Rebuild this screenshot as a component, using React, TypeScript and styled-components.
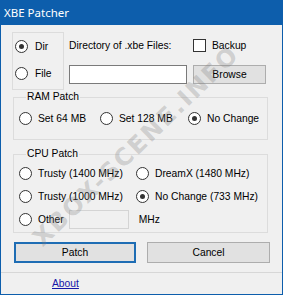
import styled, { createGlobalStyle } from 'styled-components'

const GlobalStyle = createGlobalStyle`
  html, body {
    margin: 0;
    padding: 0;
    background: #ffffff;
  }
  body {
    font-family: "Liberation Sans", Arial, sans-serif;
    font-size: 10.3px;
    color: #000000;
  }
`

const Window = styled.div`
  position: relative;
  width: 283px;
  height: 295px;
  box-sizing: border-box;
  border: 1px solid #0d5eac;
  border-top: none;
  display: flex;
  flex-direction: column;
  overflow: hidden;
`

const TitleBar = styled.div`
  height: 25px;
  margin: 0 -1px;
  background: #0d5eac;
  color: #ffffff;
  display: flex;
  align-items: center;
  padding-left: 4px;
  font-family: "Noto Sans", "Open Sans", sans-serif;
  font-size: 11.5px;
`

const Client = styled.div`
  flex: 1;
  background: #f0f0f0;
  display: flex;
  flex-direction: column;
`

const TopRow = styled.div`
  display: flex;
  gap: 5px;
  margin-top: 7px;
  padding-left: 11px;
`

const DirBox = styled.div`
  width: 52px;
  height: 58px;
  box-sizing: border-box;
  border: 1px solid #dcdcdc;
  padding: 7px 0 0 2px;
  display: flex;
  flex-direction: column;
  gap: 14px;
`

const FileArea = styled.div`
  display: grid;
  grid-template-columns: 118px 73px;
  grid-template-rows: 27px 19px;
  column-gap: 6px;
  row-gap: 6px;
  align-items: center;
`

const Option = styled.label<{ gap?: number }>`
  display: flex;
  align-items: center;
  gap: ${({ gap }) => gap ?? 6}px;
  height: 13px;
  white-space: nowrap;
`

const RadioCircle = styled.span<{ checked?: boolean }>`
  width: 13px;
  height: 13px;
  box-sizing: border-box;
  border: 1px solid #333333;
  border-radius: 50%;
  background: #ffffff;
  display: flex;
  align-items: center;
  justify-content: center;
  flex-shrink: 0;

  &::after {
    content: '';
    width: 5px;
    height: 5px;
    border-radius: 50%;
    background: ${({ checked }) => (checked ? '#333333' : 'transparent')};
  }
`

const CheckBox = styled.span`
  width: 13px;
  height: 13px;
  box-sizing: border-box;
  border: 1px solid #333333;
  background: #ffffff;
  flex-shrink: 0;
`

const TextBox = styled.div<{ disabled?: boolean; w?: number; h?: number }>`
  width: ${({ w }) => (w ? `${w}px` : '100%')};
  height: ${({ h }) => h ?? 19}px;
  box-sizing: border-box;
  border: 1px solid ${({ disabled }) => (disabled ? '#d4d4d4' : '#7a7a7a')};
  background: ${({ disabled }) => (disabled ? '#f0f0f0' : '#ffffff')};
`

const Button = styled.button<{ isDefault?: boolean; w?: number; h?: number }>`
  width: ${({ w }) => (w ? `${w}px` : '100%')};
  height: ${({ h }) => h ?? 19}px;
  box-sizing: border-box;
  margin: 0;
  padding: 0;
  background: #e1e1e1;
  border: ${({ isDefault }) => (isDefault ? '2px solid #1e6db4' : '1px solid #adadad')};
  font-family: inherit;
  font-size: inherit;
  color: #000000;
`

const Group = styled.fieldset<{ h: number; mt: number }>`
  margin: ${({ mt }) => mt}px 0 0 12px;
  width: 255px;
  height: ${({ h }) => h}px;
  box-sizing: border-box;
  border: 1px solid #dcdcdc;
  padding: 0 0 0 5px;
  min-width: 0;
`

const Legend = styled.legend`
  margin-left: 7px;
  padding: 0 1px;
  line-height: 12px;
`

const RamRow = styled.div`
  display: grid;
  grid-template-columns: 81px 88px auto;
  margin-top: 9px;
`

const CpuGrid = styled.div`
  display: grid;
  grid-template-columns: 117px auto;
  grid-auto-rows: 23px;
  align-items: center;
  margin-top: 2px;
`

const OtherRow = styled.div`
  grid-column: 1 / span 2;
  display: flex;
  align-items: center;
`

const OtherBox = styled(TextBox)`
  margin-left: 5px;
`

const Mhz = styled.span`
  margin-left: 10px;
`

const ButtonRow = styled.div`
  display: flex;
  gap: 11px;
  margin-top: 9px;
  padding-left: 13px;
`

const Separator = styled.div`
  height: 1px;
  background: #d7d7d7;
  margin-top: 9px;
`

const AboutLink = styled.a`
  margin: 5px 0 0 51px;
  color: #1616a8;
  text-decoration: underline;
  line-height: 12px;
  align-self: flex-start;
`

// watermark overlay from the source screenshot
const Watermark = styled.span`
  position: absolute;
  left: 135px;
  top: 146px;
  transform: translate(-50%, -50%) rotate(-44deg);
  font-family: "DejaVu Sans", sans-serif;
  font-weight: bold;
  font-size: 24px;
  letter-spacing: 2px;
  color: rgba(128, 128, 128, 0.3);
  white-space: nowrap;
  pointer-events: none;
`

export default function App() {
  return (
    <>
      <GlobalStyle />
      <Window>
        <TitleBar>XBE Patcher</TitleBar>
        <Client>
          <TopRow>
            <DirBox>
              <Option gap={7}>
                <RadioCircle checked />
                Dir
              </Option>
              <Option gap={7}>
                <RadioCircle />
                File
              </Option>
            </DirBox>
            <FileArea>
              <span>Directory of .xbe Files:</span>
              <Option>
                <CheckBox />
                Backup
              </Option>
              <TextBox />
              <Button>Browse</Button>
            </FileArea>
          </TopRow>

          <Group h={49} mt={1}>
            <Legend>RAM Patch</Legend>
            <RamRow>
              <Option>
                <RadioCircle />
                Set 64 MB
              </Option>
              <Option>
                <RadioCircle />
                Set 128 MB
              </Option>
              <Option>
                <RadioCircle checked />
                No Change
              </Option>
            </RamRow>
          </Group>

          <Group h={85} mt={8}>
            <Legend>CPU Patch</Legend>
            <CpuGrid>
              <Option>
                <RadioCircle />
                Trusty (1400 MHz)
              </Option>
              <Option>
                <RadioCircle />
                DreamX (1480 MHz)
              </Option>
              <Option>
                <RadioCircle />
                Trusty (1000 MHz)
              </Option>
              <Option>
                <RadioCircle checked />
                No Change (733 MHz)
              </Option>
              <OtherRow>
                <Option>
                  <RadioCircle />
                  Other
                </Option>
                <OtherBox disabled w={60} h={19} />
                <Mhz>MHz</Mhz>
              </OtherRow>
            </CpuGrid>
          </Group>

          <ButtonRow>
            <Button isDefault w={122} h={21}>
              Patch
            </Button>
            <Button w={123} h={21}>
              Cancel
            </Button>
          </ButtonRow>
          <Separator />
          <AboutLink href="#">About</AboutLink>
        </Client>
        <Watermark>XBOX-SCENE.INFO</Watermark>
      </Window>
    </>
  )
}
